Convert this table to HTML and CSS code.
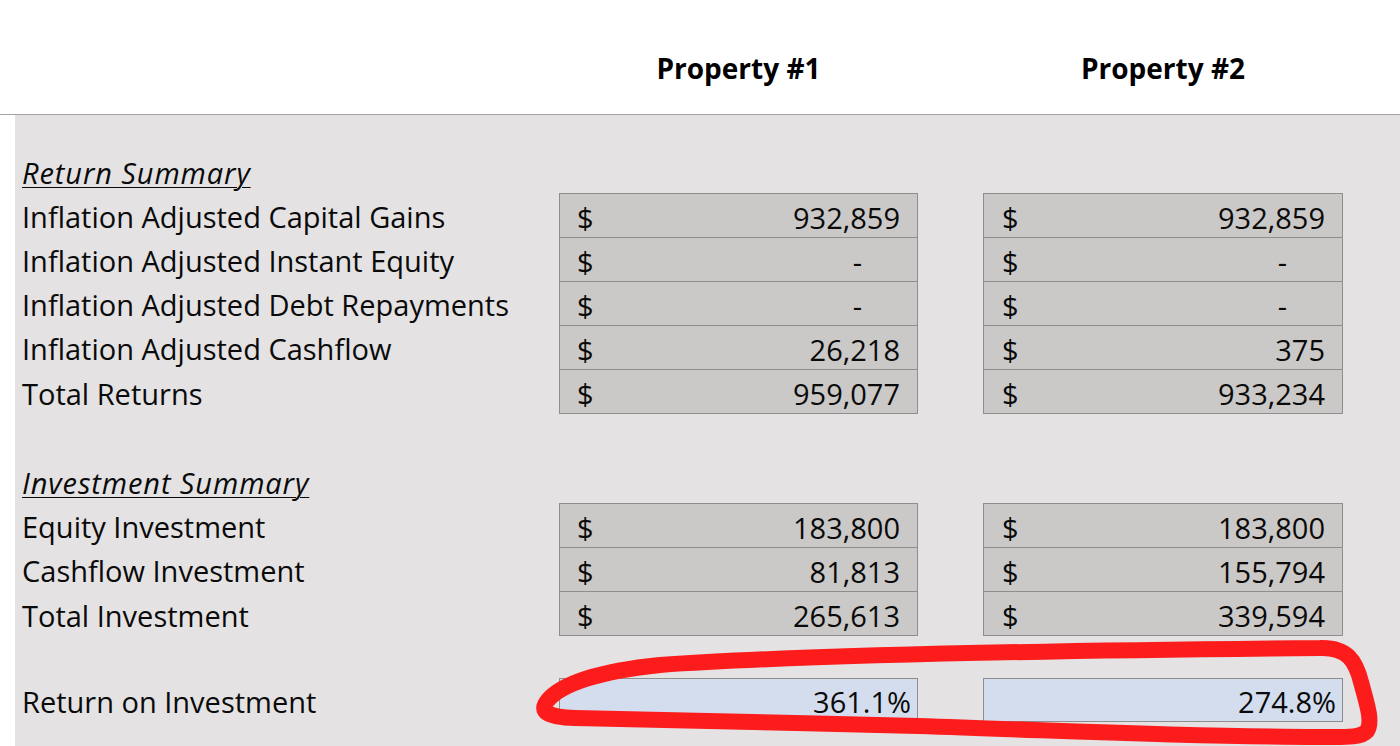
FILE: index.html
```html
<!DOCTYPE html>
<html lang="en">
<head>
<meta charset="utf-8">
<title>Property Comparison</title>
<link rel="stylesheet" href="styles.css">
</head>
<body>
<div class="page">
  <header class="header">
    <div class="head-row">
      <div></div>
      <div class="title">Property #1</div>
      <div></div>
      <div class="title">Property #2</div>
    </div>
  </header>
  <main class="sheet">
    <div class="row section">
      <div class="label heading">Return Summary</div>
    </div>
    <div class="row">
      <div class="label">Inflation Adjusted Capital Gains</div>
      <div class="cell first"><span>$</span><span>932,859</span></div>
      <div></div>
      <div class="cell first c2"><span>$</span><span>932,859</span></div>
    </div>
    <div class="row">
      <div class="label">Inflation Adjusted Instant Equity</div>
      <div class="cell"><span>$</span><span class="dash">-</span></div>
      <div></div>
      <div class="cell c2"><span>$</span><span class="dash">-</span></div>
    </div>
    <div class="row">
      <div class="label">Inflation Adjusted Debt Repayments</div>
      <div class="cell"><span>$</span><span class="dash">-</span></div>
      <div></div>
      <div class="cell c2"><span>$</span><span class="dash">-</span></div>
    </div>
    <div class="row">
      <div class="label">Inflation Adjusted Cashflow</div>
      <div class="cell"><span>$</span><span>26,218</span></div>
      <div></div>
      <div class="cell c2"><span>$</span><span>375</span></div>
    </div>
    <div class="row">
      <div class="label">Total Returns</div>
      <div class="cell last"><span>$</span><span>959,077</span></div>
      <div></div>
      <div class="cell last c2"><span>$</span><span>933,234</span></div>
    </div>

    <div class="spacer-a"></div>

    <div class="row section">
      <div class="label heading">Investment Summary</div>
    </div>
    <div class="row">
      <div class="label">Equity Investment</div>
      <div class="cell first"><span>$</span><span>183,800</span></div>
      <div></div>
      <div class="cell first c2"><span>$</span><span>183,800</span></div>
    </div>
    <div class="row">
      <div class="label">Cashflow Investment</div>
      <div class="cell"><span>$</span><span>81,813</span></div>
      <div></div>
      <div class="cell c2"><span>$</span><span>155,794</span></div>
    </div>
    <div class="row">
      <div class="label">Total Investment</div>
      <div class="cell last"><span>$</span><span>265,613</span></div>
      <div></div>
      <div class="cell last c2"><span>$</span><span>339,594</span></div>
    </div>

    <div class="spacer-b"></div>

    <div class="row roi-row">
      <div class="label">Return on Investment</div>
      <div class="roi">361.1%</div>
      <div></div>
      <div class="roi">274.8%</div>
    </div>
  </main>

  <svg class="scribble" width="1400" height="746" viewBox="0 0 1400 746" aria-hidden="true">
    <path d="M 1320 648 C 1348 647, 1356 662, 1361 682 C 1367 704, 1373 722, 1367 731 C 1361 738, 1345 737, 1320 737 C 1200 737, 1100 732, 918 726 C 800 723, 650 720, 575 718 C 548 717, 538 712, 548 700 C 562 684, 600 671, 660 665 C 800 655, 1100 650, 1320 648 Z" fill="none" stroke="#fd1c1c" stroke-width="16" stroke-linejoin="round" stroke-linecap="round"/>
  </svg>
</div>
</body>
</html>
```
FILE: styles.css
```css
* { box-sizing: border-box; }

html, body {
  margin: 0;
  padding: 0;
  background: #ffffff;
}

body {
  font-family: "Open Sans", "Liberation Sans", sans-serif;
  color: #0a0a0a;
  width: 1400px;
  height: 746px;
  overflow: hidden;
}

.page {
  position: relative;
  width: 1400px;
  height: 746px;
}

.header {
  height: 115px;
  border-bottom: 1px solid #a3a3a3;
  background: #fff;
  padding-top: 50px;
}

.head-row {
  display: grid;
  grid-template-columns: 559px 359px 65px 360px;
}

.title {
  text-align: center;
  font-weight: 700;
  font-size: 28px;
  line-height: 36px;
  color: #000;
}

.sheet {
  margin-left: 15px;
  height: 631px;
  background: #e4e2e3;
  padding: 34px 0 0 7px;
}

.row {
  display: grid;
  grid-template-columns: 537px 359px 65px 360px;
  height: 44px;
  align-items: stretch;
}

.label {
  font-size: 29px;
  display: flex;
  align-items: center;
  padding-top: 3px;
  white-space: nowrap;
}

.heading {
  font-style: italic;
  letter-spacing: 0.9px;
  text-decoration: underline;
  text-decoration-thickness: 1px;
  text-underline-offset: 3px;
}

.cell {
  background: #cac9c7;
  border: 1px solid #8e8e8e;
  border-bottom: none;
  display: flex;
  justify-content: space-between;
  align-items: center;
  padding: 3px 17px 0 17px;
  font-size: 29px;
  height: 44px;
}

.cell.c2 {
  padding-left: 18px;
}

.cell.last {
  border-bottom: 1px solid #8e8e8e;
  height: 45px;
}

.dash {
  padding-right: 38px;
}

.spacer-a {
  height: 46px;
}

.spacer-b {
  height: 43px;
}

.roi-row {
  height: 44px;
}

.roi {
  background: #d4ddee;
  border: 1px solid #8e8e8e;
  height: 44px;
  display: flex;
  justify-content: flex-end;
  align-items: center;
  padding: 3px 6px 0 0;
  font-size: 29px;
}

.scribble {
  position: absolute;
  left: 0;
  top: 0;
  pointer-events: none;
}
```
